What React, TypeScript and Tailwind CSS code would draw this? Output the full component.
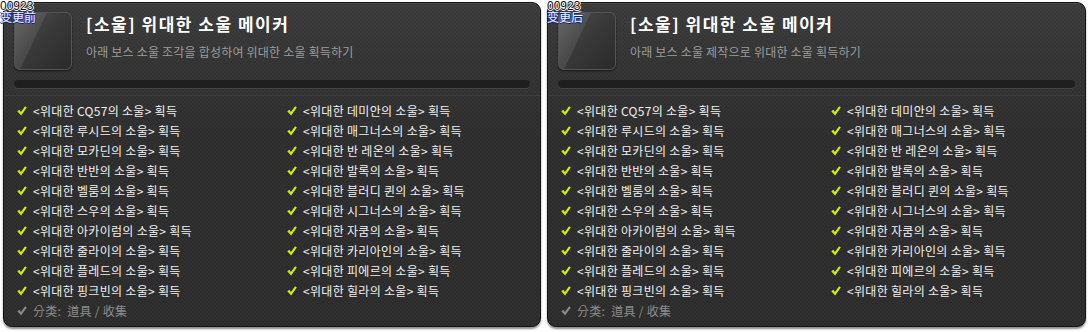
import React from 'react';

const LEFT_COL = [
  'CQ57',
  '루시드',
  '모카딘',
  '반반',
  '벨룸',
  '스우',
  '아카이럼',
  '줄라이',
  '플레드',
  '핑크빈',
];

const RIGHT_COL = [
  '데미안',
  '매그너스',
  '반 레온',
  '발록',
  '블러디 퀸',
  '시그너스',
  '자쿰',
  '카리아인',
  '피에르',
  '힐라',
];

const CheckMark = ({ color }: { color: string }) => (
  <svg width="10" height="10" viewBox="0 0 10 10" className="shrink-0">
    <path d="M0.3 5.2 L2.4 3.8 L3.9 6 L8.1 0.2 L9.8 1.4 L4.1 9.4 Z" fill={color} />
  </svg>
);

const Row = ({ name }: { name: string }) => (
  <div className="flex h-[20px] items-center">
    <CheckMark color="#d2ee00" />
    <span className="ml-[6px] whitespace-pre text-[12px] leading-[20px] tracking-[0.3px] text-[#f0f0f0]">
      {`<위대한 ${name}의 소울> 획득`}
    </span>
  </div>
);

const Panel = ({
  subtitle,
  tag,
  width,
  tagLeft,
}: {
  subtitle: string;
  tag: string;
  width: string;
  tagLeft: string;
}) => {
  return (
    <div className={`relative h-[325px] ${width} shrink-0`}>
      <div className="relative h-full w-full overflow-hidden rounded-[9px] border border-[#161616] bg-[#2d2d2d] bg-[linear-gradient(to_bottom,#3a3a3a_0px,#323232_60px,#2c2c2c_140px,#2b2b2b_100%)] shadow-[0_2px_2px_rgba(0,0,0,0.45)]">
        <div className="absolute inset-0 bg-[repeating-conic-gradient(rgba(255,255,255,0.025)_0_25%,transparent_0_50%)] bg-[length:4px_4px]" />
        <div className="absolute inset-x-0 top-0 h-px bg-[#4a4a4a]" />

        <div className="relative flex pl-[10px] pt-[9px]">
          <div className="relative h-[58px] w-[58px] shrink-0 overflow-hidden rounded-[6px] border border-[#555] bg-[linear-gradient(135deg,#505050_0%,#3a3a3a_45%,#2a2a2a_100%)] shadow-[0_1px_2px_rgba(0,0,0,0.6)]">
            <div className="absolute left-0 top-0 h-full w-full bg-[linear-gradient(115deg,rgba(255,255,255,0.14)_0%,rgba(255,255,255,0.08)_38%,transparent_39%)]" />
          </div>
          <div className="ml-[14px] flex flex-col">
            <div className="mt-[1px] text-[17px] font-bold leading-[22px] tracking-[1.5px] text-white">
              [소울] 위대한 소울 메이커
            </div>
            <div className="mt-[10px] text-[12px] leading-[14px] tracking-[0.2px] text-[#9c9c9c]">
              {subtitle}
            </div>
          </div>
        </div>

        <div className="relative mx-[10px] mt-[10px] h-[8px] rounded-full bg-[#1f1f1f] shadow-[0_1px_0_rgba(255,255,255,0.08)]" />
        <div className="relative mt-[7px] h-px bg-[#3c3c3c]" />

        <div className="relative grid grid-cols-[270px_1fr] pl-[13px] pt-[5px]">
          <div className="flex flex-col">
            {LEFT_COL.map((n) => (
              <Row key={n} name={n} />
            ))}
          </div>
          <div className="flex flex-col">
            {RIGHT_COL.map((n) => (
              <Row key={n} name={n} />
            ))}
          </div>
        </div>
        <div className="relative flex h-[20px] items-center pl-[13px]">
          <CheckMark color="#8a8a8a" />
          <span className="ml-[6px] whitespace-pre text-[12px] leading-[20px] tracking-[0.3px] text-[#8c8c8c]">
            分类:  道具 / 收集
          </span>
        </div>
      </div>

      <div
        className={`absolute ${tagLeft} top-[-2px] flex flex-col font-['Liberation_Sans','Noto_Sans_CJK_SC',sans-serif] text-[12px] leading-[12px]`}
      >
        <span className="text-[#111] [text-shadow:1px_0_0_#fff,-1px_0_0_#fff,0_1px_0_#fff,0_-1px_0_#fff]">
          00923
        </span>
        <span className="text-[#f4f4ff] [text-shadow:1px_0_0_#1c3cd8,-1px_0_0_#1c3cd8,0_1px_0_#0a1a60]">
          {tag}
        </span>
      </div>
    </div>
  );
};

export default function App() {
  return (
    <div className="flex h-[332px] w-[1090px] gap-[6px] bg-white pl-[3px] pt-[2px] font-['Noto_Sans_CJK_KR','Noto_Sans_CJK_SC',sans-serif]">
      <Panel
        width="w-[538px]"
        tag="变更前"
        tagLeft="left-[-3px]"
        subtitle="아래 보스 소울 조각을 합성하여 위대한 소울 획득하기"
      />
      <Panel
        width="w-[539px]"
        tag="变更后"
        tagLeft="left-[0px]"
        subtitle="아래 보스 소울 제작으로 위대한 소울 획득하기"
      />
    </div>
  );
}
